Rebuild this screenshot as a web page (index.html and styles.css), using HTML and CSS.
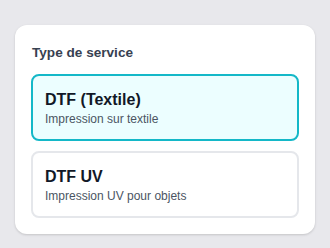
FILE: index.html
```html
<!DOCTYPE html>
<html lang="fr">
<head>
<meta charset="utf-8">
<link rel="stylesheet" href="styles.css">
</head>
<body>
<div class="card">
  <div class="label">Type de service</div>
  <div class="options">
    <div class="option selected">
      <div class="opt-title">DTF (Textile)</div>
      <div class="opt-desc">Impression sur textile</div>
    </div>
    <div class="option">
      <div class="opt-title">DTF UV</div>
      <div class="opt-desc">Impression UV pour objets</div>
    </div>
  </div>
</div>
</body>
</html>
```

FILE: styles.css
```css
html, body {
  margin: 0;
  padding: 0;
}
body {
  background: #e8e8ec;
  font-family: "Liberation Sans", Arial, sans-serif;
  padding: 25px 15px 0 15px;
  height: 248px;
  box-sizing: border-box;
}
.card {
  background: #ffffff;
  border-radius: 12px;
  box-shadow: 0 1px 3px rgba(0,0,0,0.1), 0 1px 2px rgba(0,0,0,0.06);
  padding: 16px;
}
.label {
  font-size: 13.6px;
  font-weight: bold;
  color: #374151;
  line-height: 24px;
  margin-bottom: 9px;
  padding-left: 1px;
}
.options {
  display: flex;
  flex-direction: column;
  gap: 10px;
}
.option {
  border: 2px solid #e5e7eb;
  border-radius: 8px;
  padding: 13px 12px 11px 12px;
  background: #ffffff;
}
.option.selected {
  border-color: #14b8c8;
  background: #ecfeff;
}
.opt-title {
  font-size: 16px;
  font-weight: bold;
  color: #111827;
  line-height: 22px;
}
.opt-desc {
  font-size: 12px;
  color: #4b5563;
  line-height: 17px;
}
```
